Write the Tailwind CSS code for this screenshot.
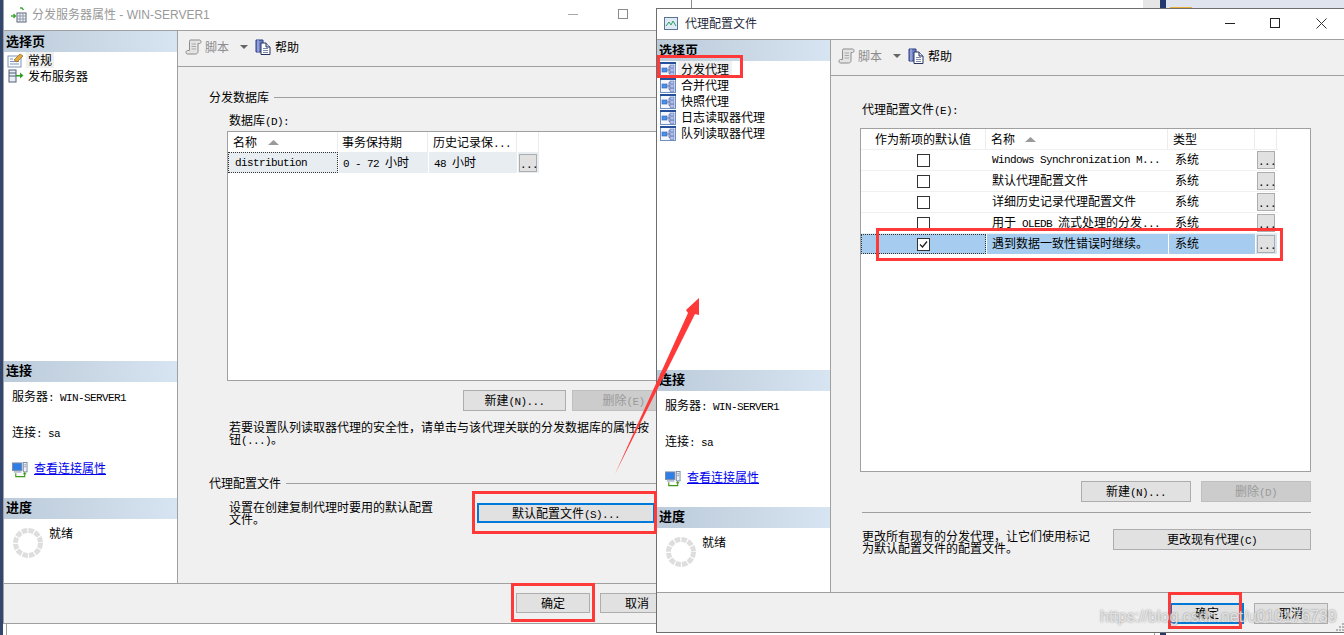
<!DOCTYPE html>
<html lang="zh-CN">
<head>
    <meta charset="UTF-8">
    <meta name="viewport" content="width=device-width, initial-scale=1.0">
    <title>代理配置文件</title>
    <script src="https://cdn.jsdelivr.net/npm/@tailwindcss/browser@4"></script>
</head>
<body class="bg-white text-black text-[12px] leading-[12px] font-['Noto_Sans_CJK_SC',sans-serif]">

    <!-- shared icons -->
    <svg class="hidden">
        <symbol id="agent" viewBox="0 0 16 15">
            <rect x="0.5" y="0.5" width="15" height="14" fill="#f4f8fd" stroke="#6f8fbd"/>
            <rect x="0" y="0" width="16" height="2" fill="#27509c"/>
            <rect x="2" y="6" width="5" height="4" fill="#4f8fe6" stroke="#2a62b8" stroke-width="0.6"/>
            <path d="M7 8h2M9 4.5v7M9 4.5h1M9 8h1M9 11.5h1" stroke="#6d7fa8" fill="none"/>
            <rect x="10" y="3" width="4" height="3" fill="#b4c4f0" stroke="#5d6fb0" stroke-width="0.6"/>
            <rect x="10" y="6.8" width="4" height="3" fill="#b4c4f0" stroke="#5d6fb0" stroke-width="0.6"/>
            <rect x="10" y="10.5" width="4" height="3" fill="#b4c4f0" stroke="#5d6fb0" stroke-width="0.6"/>
        </symbol>
        <symbol id="scroll" viewBox="0 0 17 16">
            <path d="M5 1H14.500C16.500 1 16.500 4.500 14.500 4.500H13V12.500C13 14 12 15 10.500 15H2.500C.5 15 .5 11.500 2.500 11.500H4.500V2.500C4.500 1.500 5 1 5 1z" fill="#e4e4e4" stroke="#8c8c8c"/>
            <path d="M6.500 5H11M6.500 7.500H11M6.500 10H11" stroke="#a8a8a8"/>
        </symbol>
        <symbol id="help" viewBox="0 0 16 16">
            <path d="M1 1h7v12H1z" fill="#6f7fc4" stroke="#2d3f86"/>
            <path d="M3 1v12" stroke="#b7c2ec"/>
            <path d="M6 4h5l4 4v7.500H6z" fill="#fff" stroke="#24335f"/>
            <path d="M11 4v4h4" fill="#cfd8ee" stroke="#24335f"/>
            <path d="M8 9.500h5M8 11.500h5M8 13.500h5" stroke="#7c8aa8"/>
        </symbol>
        <symbol id="connection" viewBox="0 0 17 17">
            <rect x="0.500" y="1" width="10" height="8" fill="#2f7de6" stroke="#7c8ba3"/>
            <rect x="2" y="9.500" width="8" height="2" fill="#b7c3d2"/>
            <rect x="12" y="0.500" width="4" height="10" fill="#eef1f5" stroke="#7c8ba3"/>
            <path d="M13 3h2M13 5h2" stroke="#8e9db2"/>
            <path d="M4 12v3.500h9.500V12" fill="none" stroke="#3e9a16" stroke-width="1.200"/>
            <path d="M11.500 13l2-2.500 2 2.500z" fill="#3e9a16"/>
        </symbol>
        <symbol id="spinner" viewBox="0 0 30 30">
            <circle cx="15" cy="15" r="12.500" fill="none" stroke="#dedede" stroke-width="5" stroke-dasharray="5.400 1.150"/>
        </symbol>
        <symbol id="sort" viewBox="0 0 11 5">
            <path d="M5.500 0L11 5H0z" fill="#9a9a9a"/>
        </symbol>
    </svg>

    <div class="relative w-[1344px] h-[635px] overflow-hidden bg-white">

        <!-- what shows of the desktop behind the two dialogs -->
        <div class="absolute left-0 top-0 w-[3px] h-[635px] bg-[#33466e]"></div>
        <div class="absolute left-[6px] top-[624px] w-px h-[11px] bg-[#a0a0a0]"></div>
        <div class="absolute left-[691px] top-0 w-px h-[8px] bg-[#8c8c8c]"></div>
        <div class="absolute left-[1143px] top-0 w-[17px] h-[8px] bg-[#e6e6e6]"></div>
        <div class="absolute left-[1160px] top-0 w-[6px] h-[8px] bg-[#23396b]"></div>
        <div class="absolute left-[1166px] top-0 w-[178px] h-[8px] bg-[#dfe4ee]"></div>
        <div class="absolute left-[1170px] top-[7px] w-[22px] h-px bg-[#e8b23a]"></div>
        <div class="absolute left-[1154px] top-[633px] w-px h-[2px] bg-[#a0a0a0]"></div>
        <div class="absolute left-[1160px] top-[633px] w-[6px] h-[2px] bg-[#23396b]"></div>

        <!-- 分发服务器属性 -->
        <div class="absolute left-[3px] top-0 w-[653px] h-[624px] flex flex-col overflow-hidden border-l border-b border-[#a0a0a0] bg-[#f0f0f0]">
            <div class="h-[31px] shrink-0 relative flex items-center bg-white border-b border-[#a0a0a0] text-[#999999] pl-[7px] font-['Liberation_Sans','Noto_Sans_CJK_SC',sans-serif]">
                <svg class="w-[16px] h-[16px] mr-[5px]" viewBox="0 0 16 16">
                    <path d="M0 9h4M2.500 7l2 2-2 2" fill="none" stroke="#3fa83a" stroke-width="1.300"/>
                    <path d="M9 1h2l1.500 2" fill="none" stroke="#3fa83a" stroke-width="1.300"/>
                    <rect x="6" y="6" width="9" height="9" fill="#f2f4f6" stroke="#58657a"/>
                    <path d="M6 9h9M6 12h9M9 6v9M12 6v9" stroke="#8d99ac"/>
                </svg>
                <span>分发服务器属性 - WIN-SERVER1</span>
                <span class="absolute left-[564px] top-[14px] w-[10px] h-px bg-[#a8a8a8]"></span>
                <span class="absolute left-[614px] top-[9px] w-[10px] h-[10px] border border-[#8a8a8a]"></span>
            </div>
            <div class="flex h-[552px] shrink-0">
                <aside class="w-[174px] shrink-0 flex flex-col bg-white border-r border-[#a0a0a0]">
                    <div class="h-[21px] flex items-center pl-[2px] pb-[2px] font-bold text-[13px] bg-gradient-to-r from-[#bccbda] to-[#d7e4f1]">选择页</div>
                    <div class="h-[309px]">
                        <div class="flex h-[16px] items-center pl-[3px]">
                            <svg class="w-[17px] h-[16px] mr-[2px]" viewBox="0 0 17 16">
                                <rect x="1" y="4" width="13" height="11" fill="#fbfcfe" stroke="#7f93b8"/>
                                <path d="M3 7h3M3 9.500h9M3 12h9" stroke="#7f93b8"/>
                                <path d="M7 8l6-6 3 2-6 6z" fill="#e8a93a" stroke="#8a6a24" stroke-width="0.700"/>
                            </svg>
                            <span class="bg-[#f0f0f0] h-[16px] leading-[16px] px-[2px]">常规</span>
                        </div>
                        <div class="flex h-[16px] items-center pl-[4px]">
                            <svg class="w-[16px] h-[14px] mr-[2px]" viewBox="0 0 16 14">
                                <rect x="1" y="1" width="7" height="12" fill="#e9eef4" stroke="#4f6077"/>
                                <path d="M1 4h7M1 7h7" stroke="#4f6077"/>
                                <path d="M8 6h4V3.500l3.500 3-3.500 3V7.500H8z" fill="#2f9e22"/>
                            </svg>
                            <span class="px-[2px]">发布服务器</span>
                        </div>
                    </div>
                    <div class="h-[137px]">
                        <div class="h-[21px] flex items-center pl-[2px] pb-[3px] font-bold text-[13px] bg-gradient-to-r from-[#bccbda] to-[#d7e4f1]">连接</div>
                        <div class="flex flex-col gap-[24px] pt-[8px] pl-[8px]">
                            <div>服务器<span class="font-['Liberation_Mono',monospace] text-[11px] leading-[0] tracking-[-0.6px]">: WIN-SERVER1</span></div>
                            <div>连接<span class="font-['Liberation_Mono',monospace] text-[11px] leading-[0] tracking-[-0.6px]">: sa</span></div>
                            <div class="flex items-start">
                                <svg class="w-[16px] h-[16px] mr-[6px]"><use href="#connection"/></svg>
                                <a href="#" class="text-[#0000ee] underline">查看连接属性</a>
                            </div>
                        </div>
                    </div>
                    <div class="h-[85px]">
                        <div class="h-[21px] flex items-center pl-[2px] pb-[3px] font-bold text-[13px] bg-gradient-to-r from-[#bccbda] to-[#d7e4f1]">进度</div>
                        <div class="flex pl-[9px] pt-[9px]">
                            <svg class="w-[30px] h-[30px] mr-[6px]"><use href="#spinner"/></svg>
                            <span class="-mt-[1px]">就绪</span>
                        </div>
                    </div>
                </aside>
                <main class="flex-1 min-w-0 flex flex-col">
                    <div class="h-[36px] shrink-0 flex items-center pl-[7px] pb-[4px] border-b border-[#a0a0a0]">
                        <svg class="w-[17px] h-[16px] mr-[3px]"><use href="#scroll"/></svg>
                        <span class="text-[#8c8c8c]">脚本</span>
                        <svg class="w-[8px] h-[4px] ml-[11px] mr-[7px]" viewBox="0 0 8 4"><path d="M0 0h8L4 4z" fill="#666"/></svg>
                        <svg class="w-[16px] h-[16px] mr-[4px]"><use href="#help"/></svg>
                        <span>帮助</span>
                    </div>
                    <div class="pl-[31px] pt-[24px]">
                        <div class="flex items-center gap-[5px]">
                            <span>分发数据库</span>
                            <span class="flex-1 h-px bg-[#a0a0a0]"></span>
                        </div>
                        <div class="pl-[20px]">
                            <div class="mt-[11px]">数据库<span class="font-['Liberation_Mono',monospace] text-[11px] leading-[0] tracking-[-0.6px]">(D):</span></div>
                            <div class="mt-[5px] -ml-[2px] w-[440px] h-[250px] bg-white border border-[#a0a0a0]">
                                <div class="grid grid-cols-[110px_89px_88px_21px] gap-x-px h-[20px] items-center w-[311px]">
                                    <div class="flex items-center pl-[5px] h-[20px] border-r border-[#ececec]">名称<svg class="w-[11px] h-[5px] ml-[11px]"><use href="#sort"/></svg></div>
                                    <div class="pl-[3px] h-[20px] leading-[20px] border-r border-[#ececec]">事务保持期</div>
                                    <div class="pl-[4px] h-[20px] leading-[20px] border-r border-[#ececec]">历史记录保<span class="font-['Liberation_Mono',monospace] text-[11px] leading-[0] tracking-[-0.6px]">...</span></div>
                                    <div class="h-[20px] border-r border-[#ececec]"></div>
                                </div>
                                <div class="grid grid-cols-[110px_89px_88px_21px] gap-x-px h-[21px] items-center w-[311px] bg-white">
                                    <div class="h-[21px] leading-[20px] pl-[6px] bg-[#e8edf2] border border-dotted border-[#333] font-['Liberation_Mono',monospace] text-[11px] tracking-[-0.6px]">distribution</div>
                                    <div class="h-[21px] leading-[19px] pl-[4px] bg-[#e8edf2]"><span class="font-['Liberation_Mono',monospace] text-[11px] leading-[0] tracking-[-0.6px]">0 - 72 </span>小时</div>
                                    <div class="h-[21px] leading-[19px] pl-[5px] bg-[#e8edf2]"><span class="font-['Liberation_Mono',monospace] text-[11px] leading-[0] tracking-[-0.6px]">48 </span>小时</div>
                                    <div class="h-[21px] flex items-center pl-[1px] bg-[#e8edf2]">
                                        <button class="w-[18px] h-[18px] bg-[#e1e1e1] border border-[#adadad] font-['Liberation_Mono',monospace] text-[11px] tracking-[-0.6px] leading-[20px]">...</button>
                                    </div>
                                </div>
                            </div>
                            <div class="mt-[9px] ml-[234px] flex gap-[6px] w-[300px]">
                                <button class="w-[103px] h-[21px] pb-[2px] bg-[#e1e1e1] border border-[#adadad]">新建<span class="font-['Liberation_Mono',monospace] text-[11px] leading-[0] tracking-[-0.6px]">(N)...</span></button>
                                <button class="w-[103px] h-[21px] pb-[2px] bg-[#cccccc] border border-[#bfbfbf] text-[#9a9a9a]">删除<span class="font-['Liberation_Mono',monospace] text-[11px] leading-[0] tracking-[-0.6px]">(E)</span></button>
                            </div>
                            <p class="mt-[10px] w-[424px]">若要设置队列读取器代理的安全性&#65292;请单击与该代理关联的分发数据库的属性按<br>钮<span class="font-['Liberation_Mono',monospace] text-[11px] leading-[0] tracking-[-0.6px]">(...)</span>。</p>
                        </div>
                        <div class="mt-[32px] flex items-center gap-[5px]">
                            <span>代理配置文件</span>
                            <span class="flex-1 h-px bg-[#a0a0a0]"></span>
                        </div>
                        <div class="pl-[20px] mt-[12px] flex items-start">
                            <p class="w-[248px] shrink-0">设置在创建复制代理时要用的默认配置<br>文件。</p>
                            <button class="mt-[2px] w-[178px] h-[20px] pb-[1px] shrink-0 bg-[#e1e1e1] border-2 border-[#0078d7]">默认配置文件<span class="font-['Liberation_Mono',monospace] text-[11px] leading-[0] tracking-[-0.6px]">(S)...</span></button>
                        </div>
                    </div>
                </main>
            </div>
            <footer class="flex-1 flex gap-[10px] pl-[512px] pt-[9px] border-t border-[#a0a0a0]">
                <button class="w-[74px] h-[20px] shrink-0 bg-[#e1e1e1] border border-[#adadad]">确定</button>
                <button class="w-[74px] h-[20px] shrink-0 bg-[#e1e1e1] border border-[#adadad]">取消</button>
            </footer>
        </div>

        <!-- 代理配置文件 -->
        <div class="absolute left-[656px] top-[8px] w-[689px] h-[625px] flex flex-col overflow-hidden border-l border-t border-b border-[#6e6e6e] bg-[#f0f0f0]">
            <div class="h-[31px] shrink-0 relative flex items-center bg-white border-b border-[#a0a0a0] pl-[7px] text-[#1f2a3c] font-['Liberation_Sans','Noto_Sans_CJK_SC',sans-serif]">
                <svg class="w-[14px] h-[14px] mr-[7px]" viewBox="0 0 14 14">
                    <rect x="0.500" y="0.500" width="13" height="12" fill="#dfeaf5" stroke="#5a7398"/>
                    <path d="M2 9l3-4 2 3 2-4 3 5" fill="none" stroke="#2f9e6a"/>
                </svg>
                <span>代理配置文件</span>
                <span class="absolute left-[568px] top-[14px] w-[10px] h-px bg-[#222]"></span>
                <span class="absolute left-[613px] top-[9px] w-[10px] h-[10px] border border-[#222]"></span>
                <svg class="absolute left-[659px] top-[9px] w-[11px] h-[11px]" viewBox="0 0 11 11"><path d="M.5.500l10 10M10.500.500l-10 10" stroke="#333"/></svg>
            </div>
            <div class="flex h-[552px] shrink-0">
                <aside class="w-[174px] shrink-0 flex flex-col bg-white border-r border-[#a0a0a0]">
                    <div class="h-[21px] flex items-center pl-[2px] pb-[2px] font-bold text-[13px] bg-gradient-to-r from-[#bccbda] to-[#d7e4f1]">选择页</div>
                    <div class="h-[309px] pl-[3px]">
                        <div class="flex h-[16px] items-center">
                            <svg class="w-[16px] h-[15px] mr-[2px]"><use href="#agent"/></svg>
                            <span class="bg-[#f0f0f0] h-[16px] leading-[16px] px-[3px]">分发代理</span>
                        </div>
                        <div class="flex h-[16px] items-center">
                            <svg class="w-[16px] h-[15px] mr-[2px]"><use href="#agent"/></svg>
                            <span class="px-[3px]">合并代理</span>
                        </div>
                        <div class="flex h-[16px] items-center">
                            <svg class="w-[16px] h-[15px] mr-[2px]"><use href="#agent"/></svg>
                            <span class="px-[3px]">快照代理</span>
                        </div>
                        <div class="flex h-[16px] items-center">
                            <svg class="w-[16px] h-[15px] mr-[2px]"><use href="#agent"/></svg>
                            <span class="px-[3px]">日志读取器代理</span>
                        </div>
                        <div class="flex h-[16px] items-center">
                            <svg class="w-[16px] h-[15px] mr-[2px]"><use href="#agent"/></svg>
                            <span class="px-[3px]">队列读取器代理</span>
                        </div>
                    </div>
                    <div class="h-[137px]">
                        <div class="h-[21px] flex items-center pl-[2px] pb-[3px] font-bold text-[13px] bg-gradient-to-r from-[#bccbda] to-[#d7e4f1]">连接</div>
                        <div class="flex flex-col gap-[24px] pt-[8px] pl-[8px]">
                            <div>服务器<span class="font-['Liberation_Mono',monospace] text-[11px] leading-[0] tracking-[-0.6px]">: WIN-SERVER1</span></div>
                            <div>连接<span class="font-['Liberation_Mono',monospace] text-[11px] leading-[0] tracking-[-0.6px]">: sa</span></div>
                            <div class="flex items-start">
                                <svg class="w-[16px] h-[16px] mr-[6px]"><use href="#connection"/></svg>
                                <a href="#" class="text-[#0000ee] underline">查看连接属性</a>
                            </div>
                        </div>
                    </div>
                    <div class="h-[85px]">
                        <div class="h-[21px] flex items-center pl-[2px] pb-[3px] font-bold text-[13px] bg-gradient-to-r from-[#bccbda] to-[#d7e4f1]">进度</div>
                        <div class="flex pl-[9px] pt-[9px]">
                            <svg class="w-[30px] h-[30px] mr-[6px]"><use href="#spinner"/></svg>
                            <span class="-mt-[1px]">就绪</span>
                        </div>
                    </div>
                </aside>
                <main class="flex-1 min-w-0 flex flex-col">
                    <div class="h-[36px] shrink-0 flex items-center pl-[7px] pb-[4px] border-b border-[#a0a0a0]">
                        <svg class="w-[17px] h-[16px] mr-[3px]"><use href="#scroll"/></svg>
                        <span class="text-[#8c8c8c]">脚本</span>
                        <svg class="w-[8px] h-[4px] ml-[11px] mr-[7px]" viewBox="0 0 8 4"><path d="M0 0h8L4 4z" fill="#666"/></svg>
                        <svg class="w-[16px] h-[16px] mr-[4px]"><use href="#help"/></svg>
                        <span>帮助</span>
                    </div>
                    <div class="pl-[31px] pt-[27px] w-[480px]">
                        <div>代理配置文件<span class="font-['Liberation_Mono',monospace] text-[11px] leading-[0] tracking-[-0.6px]">(E):</span></div>
                        <div class="mt-[13px] -ml-[2px] w-[451px] h-[344px] bg-white border border-[#a0a0a0]">
                            <div class="grid grid-cols-[125px_181px_86px_21px] gap-x-px h-[20px] w-[417px]">
                                <div class="text-center leading-[20px] border-r border-[#ececec]">作为新项的默认值</div>
                                <div class="flex items-center pl-[4px] border-r border-[#ececec]">名称<svg class="w-[11px] h-[5px] ml-[10px]"><use href="#sort"/></svg></div>
                                <div class="pl-[4px] leading-[20px] border-r border-[#ececec]">类型</div>
                                <div class="border-r border-[#ececec]"></div>
                            </div>
                            <div class="grid grid-cols-[125px_181px_86px_21px] gap-x-px h-[21px] w-[417px] items-center border-t border-[#f0f0f0]">
                                <div class="flex justify-center"><span class="w-[13px] h-[13px] border border-[#333] bg-white"></span></div>
                                <div class="pl-[5px] font-['Liberation_Mono',monospace] text-[11px] tracking-[-0.6px]">Windows Synchronization M...</div>
                                <div class="pl-[6px] mb-[2px]">系统</div>
                                <div class="flex pl-[1px]"><button class="w-[18px] h-[18px] bg-[#e1e1e1] border border-[#adadad] font-['Liberation_Mono',monospace] text-[11px] tracking-[-0.6px] leading-[20px]">...</button></div>
                            </div>
                            <div class="grid grid-cols-[125px_181px_86px_21px] gap-x-px h-[21px] w-[417px] items-center border-t border-[#f0f0f0]">
                                <div class="flex justify-center"><span class="w-[13px] h-[13px] border border-[#333] bg-white"></span></div>
                                <div class="pl-[5px] mb-[2px]">默认代理配置文件</div>
                                <div class="pl-[6px] mb-[2px]">系统</div>
                                <div class="flex pl-[1px]"><button class="w-[18px] h-[18px] bg-[#e1e1e1] border border-[#adadad] font-['Liberation_Mono',monospace] text-[11px] tracking-[-0.6px] leading-[20px]">...</button></div>
                            </div>
                            <div class="grid grid-cols-[125px_181px_86px_21px] gap-x-px h-[21px] w-[417px] items-center border-t border-[#f0f0f0]">
                                <div class="flex justify-center"><span class="w-[13px] h-[13px] border border-[#333] bg-white"></span></div>
                                <div class="pl-[5px] mb-[2px]">详细历史记录代理配置文件</div>
                                <div class="pl-[6px] mb-[2px]">系统</div>
                                <div class="flex pl-[1px]"><button class="w-[18px] h-[18px] bg-[#e1e1e1] border border-[#adadad] font-['Liberation_Mono',monospace] text-[11px] tracking-[-0.6px] leading-[20px]">...</button></div>
                            </div>
                            <div class="grid grid-cols-[125px_181px_86px_21px] gap-x-px h-[21px] w-[417px] items-center border-t border-[#f0f0f0]">
                                <div class="flex justify-center"><span class="w-[13px] h-[13px] border border-[#333] bg-white"></span></div>
                                <div class="pl-[5px] mb-[2px]">用于<span class="font-['Liberation_Mono',monospace] text-[11px] leading-[0] tracking-[-0.6px]"> OLEDB </span>流式处理的分发<span class="font-['Liberation_Mono',monospace] text-[11px] leading-[0] tracking-[-0.6px]">...</span></div>
                                <div class="pl-[6px] mb-[2px]">系统</div>
                                <div class="flex pl-[1px]"><button class="w-[18px] h-[18px] bg-[#e1e1e1] border border-[#adadad] font-['Liberation_Mono',monospace] text-[11px] tracking-[-0.6px] leading-[20px]">...</button></div>
                            </div>
                            <div class="grid grid-cols-[125px_181px_86px_21px] gap-x-px h-[21px] w-[417px] items-center border-t border-[#f0f0f0]">
                                <div class="flex justify-center items-center h-[20px] bg-[#a6cdef] border border-dotted border-[#333]">
                                    <span class="w-[13px] h-[13px] border border-[#333] bg-white flex items-center justify-center">
                                        <svg class="w-[9px] h-[9px]" viewBox="0 0 9 9"><path d="M1 4.500l2.500 2.500L8 1.500" fill="none" stroke="#222" stroke-width="1.300"/></svg>
                                    </span>
                                </div>
                                <div class="pl-[5px] h-[20px] leading-[18px] bg-[#a6cdef]">遇到数据一致性错误时继续。</div>
                                <div class="pl-[6px] h-[20px] leading-[18px] bg-[#a6cdef]">系统</div>
                                <div class="flex pl-[1px] items-center h-[20px] bg-[#d6e6f5]"><button class="w-[18px] h-[18px] bg-[#e1e1e1] border border-[#adadad] font-['Liberation_Mono',monospace] text-[11px] tracking-[-0.6px] leading-[20px]">...</button></div>
                            </div>
                        </div>
                        <div class="mt-[9px] flex justify-end gap-[10px] w-[449px]">
                            <button class="w-[110px] h-[21px] pb-[2px] bg-[#e1e1e1] border border-[#adadad]">新建<span class="font-['Liberation_Mono',monospace] text-[11px] leading-[0] tracking-[-0.6px]">(N)...</span></button>
                            <button class="w-[110px] h-[21px] pb-[2px] bg-[#cccccc] border border-[#bfbfbf] text-[#9a9a9a]">删除<span class="font-['Liberation_Mono',monospace] text-[11px] leading-[0] tracking-[-0.6px]">(D)</span></button>
                        </div>
                        <div class="mt-[10px] w-[449px] h-px bg-[#a0a0a0]"></div>
                        <div class="mt-[16px] flex w-[449px] items-start justify-between">
                            <p class="mt-[1px]">更改所有现有的分发代理&#65292;让它们使用标记<br>为默认配置文件的配置文件。</p>
                            <button class="w-[198px] h-[21px] pb-[2px] shrink-0 bg-[#e1e1e1] border border-[#adadad]">更改现有代理<span class="font-['Liberation_Mono',monospace] text-[11px] leading-[0] tracking-[-0.6px]">(C)</span></button>
                        </div>
                    </div>
                </main>
            </div>
            <footer class="flex-1 flex justify-end gap-[10px] pr-[17px] pt-[10px] border-t border-[#a0a0a0]">
                <button class="w-[74px] h-[21px] pb-[2px] shrink-0 bg-[#e1e1e1] border-2 border-[#0078d7]">确定</button>
                <button class="w-[74px] h-[21px] pb-[2px] shrink-0 bg-[#e1e1e1] border border-[#adadad]">取消</button>
            </footer>
        </div>

        <!-- red annotations drawn over the screenshot -->
        <div class="absolute left-[657px] top-[55px] w-[86px] h-[23px] border-3 border-[#ff3838]"></div>
        <div class="absolute left-[876px] top-[228px] w-[407px] h-[33px] border-3 border-[#ff3838]"></div>
        <div class="absolute left-[472px] top-[491px] w-[185px] h-[43px] border-3 border-[#ff3838]"></div>
        <div class="absolute left-[511px] top-[583px] w-[84px] h-[39px] border-3 border-[#ff3838]"></div>
        <div class="absolute left-[1168px] top-[592px] w-[74px] h-[37px] border-3 border-[#ff3838]"></div>
        <svg class="absolute left-0 top-0 w-[1344px] h-[635px] pointer-events-none" viewBox="0 0 1344 635">
            <polygon points="615,474 688,313 686,310 699,298 699,315 695,314" fill="#ff3838"/>
        </svg>

        <!-- blog watermark -->
        <div class="absolute left-[1100px] top-[607px] font-['Liberation_Sans',sans-serif] text-[16px] leading-[20px] text-white/70 [text-shadow:0_0_2px_#777]">https://blog.csdn.net/u010176739</div>
        <svg class="absolute left-[1335px] top-[622px] w-[9px] h-[10px]" viewBox="0 0 9 10"><path d="M7 1h2v2H7zM4 4h2v2H4zM7 4h2v2H7zM1 7h2v2H1zM4 7h2v2H4zM7 7h2v2H7z" fill="#b5b5b5"/></svg>
    </div>
</body>
</html>
